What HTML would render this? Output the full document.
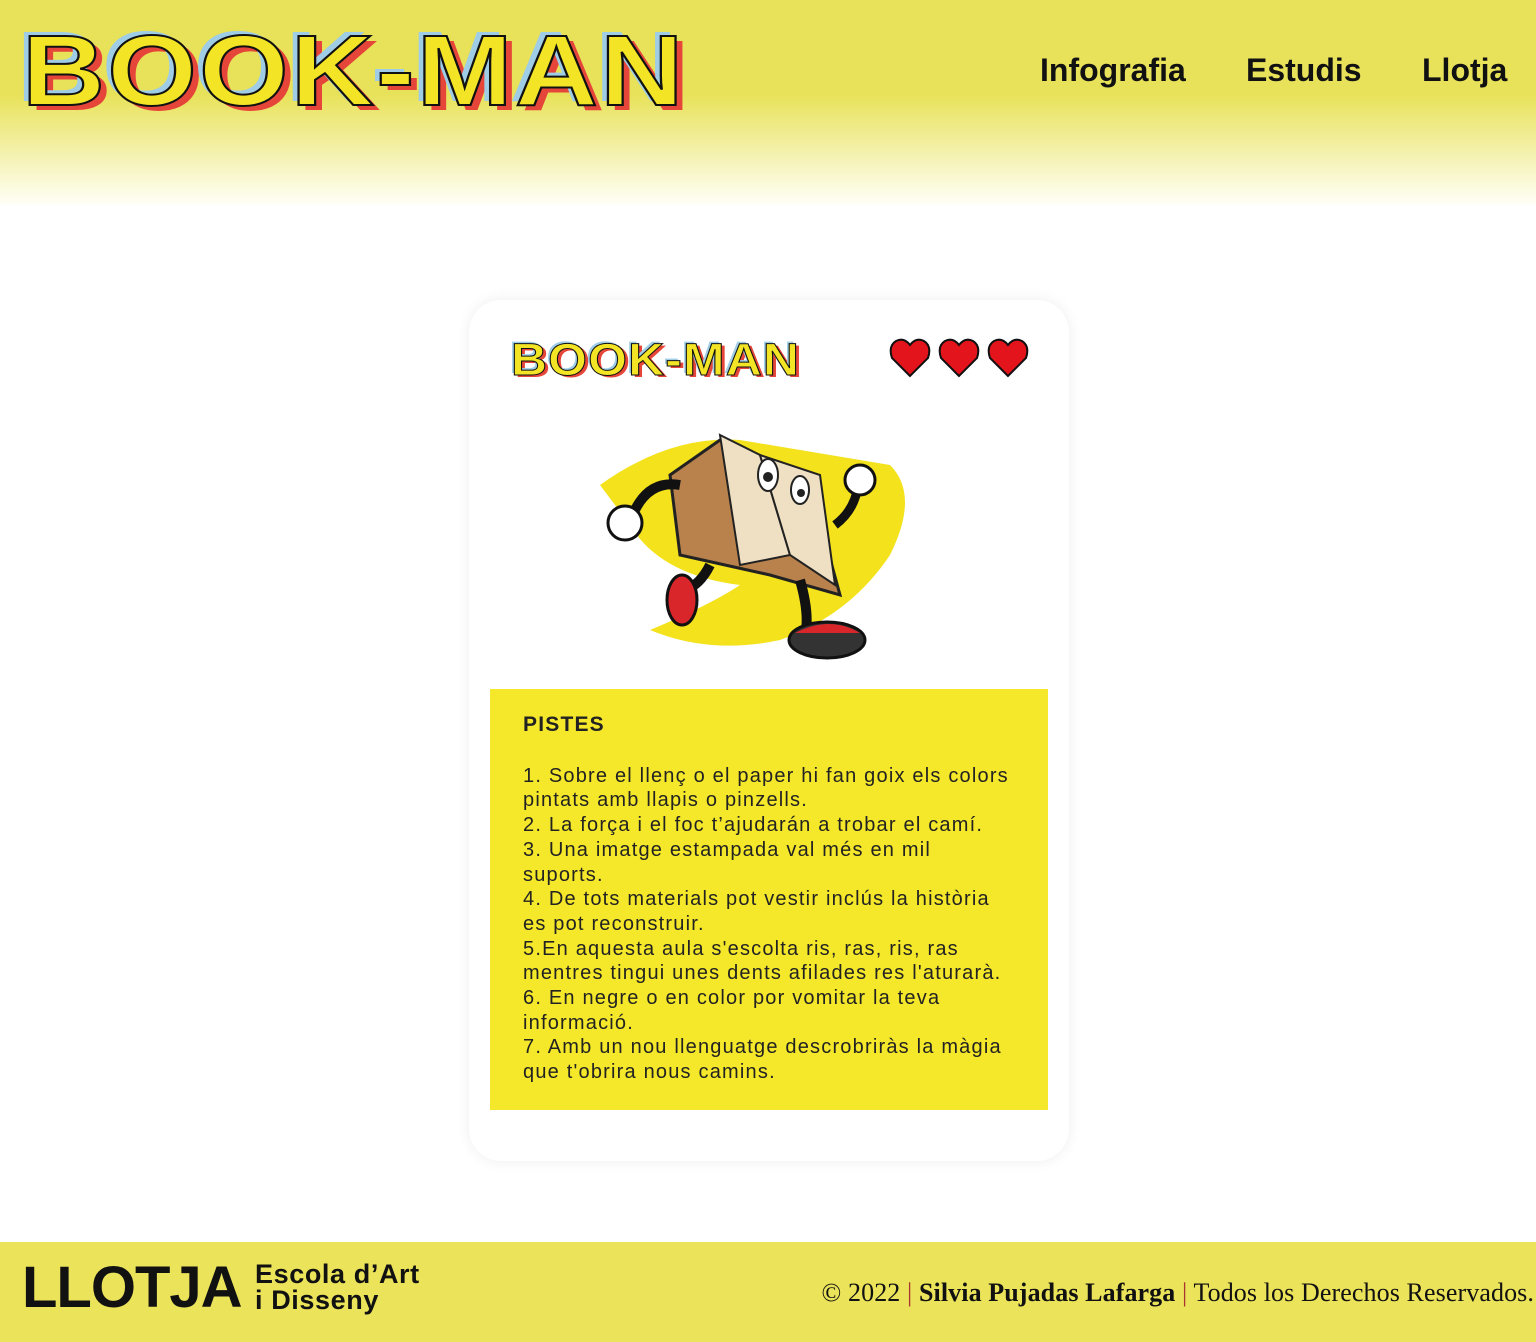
<!DOCTYPE html>
<html><head><meta charset="utf-8"><style>
*{margin:0;padding:0;box-sizing:border-box}
body{width:1536px;height:1342px;position:relative;background:#fff;font-family:"Liberation Sans",sans-serif;overflow:hidden}
.hdr{position:absolute;left:0;top:0;width:1536px;height:205px;background:linear-gradient(#e8e25a 0,#e8e25a 95px,#fffff8 205px)}
.logo{position:absolute;font-family:"Liberation Sans",sans-serif;font-weight:900;color:#f3e526;-webkit-text-stroke:2px #111;letter-spacing:2px;white-space:nowrap}
.nav{position:absolute;top:52px;font-size:32px;font-weight:bold;color:#111}
.card{position:absolute;left:469px;top:300px;width:600px;height:861px;background:#fff;border-radius:32px;box-shadow:0 0 14px rgba(0,0,0,0.07)}
.yb{position:absolute;left:490px;top:689px;width:558px;height:421px;background:#f5e82a;padding:24px 33px;font-size:20px;line-height:24.7px;color:#222;letter-spacing:1.2px;white-space:nowrap}
.ftr{position:absolute;left:0;top:1242px;width:1536px;height:100px;background:#ebe35a}
</style></head><body>
<div class="hdr"></div>
<div class="logo" style="left:22px;top:14px;font-size:100px;text-shadow:-5px -4px 0 #9fcde6,6px 5px 0 #e6463a;transform:scaleX(1.15);transform-origin:left">BOOK-MAN</div>
<div class="nav" style="left:1040px">Infografia</div>
<div class="nav" style="left:1246px">Estudis</div>
<div class="nav" style="left:1422px">Llotja</div>
<div class="card"></div>
<div class="logo" style="left:511px;top:334px;font-size:45px;-webkit-text-stroke:1px #111;letter-spacing:1px;text-shadow:-2px -2px 0 #9fcde6,3px 2px 0 #e6463a;transform:scaleX(1.11);transform-origin:left">BOOK-MAN</div>
<svg style="position:absolute;left:888px;top:336px" width="145" height="44" viewBox="0 0 145 44">
<g fill="#e3141b" stroke="#111" stroke-width="2">
<path d="M22 40 L4 22 Q0 10 8 5 Q16 1 22 9 Q28 1 36 5 Q44 10 40 22 Z"/>
<path transform="translate(49,0)" d="M22 40 L4 22 Q0 10 8 5 Q16 1 22 9 Q28 1 36 5 Q44 10 40 22 Z"/>
<path transform="translate(98,0)" d="M22 40 L4 22 Q0 10 8 5 Q16 1 22 9 Q28 1 36 5 Q44 10 40 22 Z"/>
</g></svg>
<svg style="position:absolute;left:590px;top:415px" width="330" height="250" viewBox="0 0 330 250">
<path d="M10 70 Q80 20 150 25 L300 50 Q330 80 300 140 Q260 200 190 225 Q120 240 60 215 Q120 190 150 170 Q70 160 40 110 Z" fill="#f3e21c"/>
<path d="M80 60 L130 25 L220 70 L250 180 L180 160 L90 140 Z" fill="#b9824d" stroke="#222" stroke-width="3"/>
<path d="M130 20 L170 40 L200 140 L150 150 Z" fill="#efe0c4" stroke="#222" stroke-width="2"/>
<path d="M170 40 L230 60 L245 170 L200 140 Z" fill="#efe0c4" stroke="#222" stroke-width="2"/>
<ellipse cx="178" cy="60" rx="10" ry="16" fill="#fff" stroke="#222" stroke-width="2"/><circle cx="178" cy="62" r="5" fill="#222"/>
<ellipse cx="210" cy="75" rx="9" ry="14" fill="#fff" stroke="#222" stroke-width="2"/><circle cx="211" cy="78" r="4" fill="#222"/>
<path d="M90 70 Q60 65 45 95" stroke="#111" stroke-width="10" fill="none"/>
<circle cx="35" cy="108" r="17" fill="#fff" stroke="#111" stroke-width="3"/>
<path d="M245 110 Q265 95 268 70" stroke="#111" stroke-width="9" fill="none"/>
<circle cx="270" cy="65" r="15" fill="#fff" stroke="#111" stroke-width="3"/>
<path d="M120 150 Q110 170 95 175" stroke="#111" stroke-width="10" fill="none"/>
<ellipse cx="92" cy="185" rx="15" ry="25" fill="#d9262a" stroke="#111" stroke-width="3"/>
<path d="M210 165 Q220 200 215 220" stroke="#111" stroke-width="10" fill="none"/>
<ellipse cx="237" cy="225" rx="38" ry="18" fill="#333" stroke="#111" stroke-width="3"/>
<path d="M205 218 Q240 200 270 218" fill="#d9262a"/>
</svg>
<div class="yb"><div style="font-weight:bold;font-size:21px;margin-bottom:26px">PISTES</div>
1. Sobre el llenç o el paper hi fan goix els colors<br>pintats amb llapis o pinzells.<br>2. La força i el foc t’ajudarán a trobar el camí.<br>3. Una imatge estampada val més en mil<br>suports.<br>4. De tots materials pot vestir inclús la història<br>es pot reconstruir.<br>5.En aquesta aula s'escolta ris, ras, ris, ras<br>mentres tingui unes dents afilades res l'aturarà.<br>6. En negre o en color por vomitar la teva<br>informació.<br>7. Amb un nou llenguatge descrobriràs la màgia<br>que t'obrira nous camins.</div>
<div class="ftr"></div>
<div style="position:absolute;left:22px;top:1254px;font-size:58px;font-weight:900;letter-spacing:-1px;color:#111">LLOTJA</div>
<div style="position:absolute;left:255px;top:1261px;font-size:27px;font-weight:bold;line-height:26px;color:#111;letter-spacing:0.6px">Escola d’Art<br>i Disseny</div>
<div style="position:absolute;right:2px;top:1278px;font-family:'Liberation Serif',serif;font-size:26px;color:#111;letter-spacing:0.1px">© 2022 <span style="color:#a33">|</span> <b>Silvia Pujadas Lafarga</b> <span style="color:#a33">|</span> Todos los Derechos Reservados.</div>
</body></html>
